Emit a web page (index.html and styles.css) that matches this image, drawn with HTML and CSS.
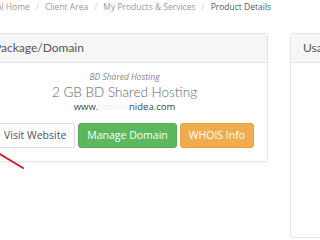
FILE: index.html
```html
<!DOCTYPE html>
<html lang="en">
<head>
  <meta charset="UTF-8">
  <title>Product Details</title>
  <link rel="stylesheet" href="styles.css">
</head>
<body>
  <div class="page">
    <ol class="breadcrumb">
      <li><a href="#">Portal Home</a></li>
      <li><a href="#">Client Area</a></li>
      <li><a href="#">My Products &amp; Services</a></li>
      <li class="active">Product Details</li>
    </ol>

    <div class="row">
      <div class="panel panel-product">
        <div class="panel-heading">Package/Domain</div>
        <div class="panel-body">
          <div class="group">BD Shared Hosting</div>
          <div class="product">2 GB BD Shared Hosting</div>
          <div class="domain">www.<span class="hidden-part">bdsom</span>nidea.com</div>
          <div class="actions">
            <a class="btn btn-default" href="#">Visit Website</a>
            <a class="btn btn-success" href="#">Manage Domain</a>
            <a class="btn btn-warning" href="#">WHOIS Info</a>
          </div>
        </div>
      </div>

      <div class="panel panel-usage">
        <div class="panel-heading">Usage Statistics</div>
      </div>
    </div>
  </div>

  <!-- red marker pointing at the Visit Website button -->
  <svg class="marker" width="30" height="24" viewBox="0 0 30 24">
    <line x1="-2" y1="2" x2="23" y2="17" stroke="#cf1f2e" stroke-width="2" stroke-linecap="round"/>
  </svg>
</body>
</html>
```

FILE: styles.css
```css
html, body {
  margin: 0;
  padding: 0;
  background-color: #fff;
  overflow: hidden;
}

body {
  font-family: "Open Sans", Arial, sans-serif;
  color: #555;
}

.page {
  margin-left: -20px;
  width: 500px;
}

.breadcrumb {
  display: flex;
  list-style: none;
  margin: 0;
  padding: 0;
  font-size: 8.5px;
  line-height: 14px;
}

.breadcrumb a {
  color: #999;
  text-decoration: none;
}

.breadcrumb li + li::before {
  content: "/";
  padding: 0 6px;
  color: #d0d0d0;
}

.breadcrumb .active {
  color: #4f5d6b;
}

.row {
  display: flex;
  align-items: flex-start;
  gap: 22px;
  margin-top: 19px;
}

.panel {
  border: 1px solid #e6e6e6;
  border-radius: 3px;
  background-color: #fff;
  box-shadow: 0 1px 2px rgba(0, 0, 0, 0.05);
  overflow: hidden;
}

.panel-heading {
  background-color: #f6f6f6;
  border-bottom: 1px solid #e6e6e6;
  padding: 0 12px;
  height: 28px;
  line-height: 28px;
  font-family: Lato, "Open Sans", sans-serif;
  font-size: 12px;
  color: #555;
}

.panel-product {
  margin-left: 1px;
  width: 285px;
}

.panel-usage {
  width: 160px;
  height: 203px;
}

.panel-body {
  text-align: center;
  padding: 6px 0 13px;
}

.group {
  font-size: 8.5px;
  font-style: italic;
  color: #888;
  line-height: 16px;
}

.product {
  font-family: Lato, "Open Sans", sans-serif;
  font-weight: 300;
  font-size: 13.5px;
  color: #666;
  line-height: 14px;
}

.domain {
  font-size: 9.5px;
  color: #34495e;
  line-height: 15px;
}

.hidden-part {
  color: #eeeeee;
}

.actions {
  display: flex;
  justify-content: center;
  gap: 3px;
  margin-top: 9px;
}

.btn {
  display: inline-block;
  font-size: 10.5px;
  line-height: 15px;
  padding: 4px 8px;
  border: 1px solid transparent;
  border-radius: 3px;
  text-decoration: none;
}

.btn-default {
  color: #555;
  background-color: #fff;
  border-color: #dcdcdc;
}

.btn-success {
  color: #fff;
  background-color: #5cb85c;
  border-color: #55ad55;
}

.btn-warning {
  color: #fff;
  background-color: #f0ad4e;
  border-color: #e5a244;
}

.marker {
  position: absolute;
  left: 0;
  top: 151px;
}
```
